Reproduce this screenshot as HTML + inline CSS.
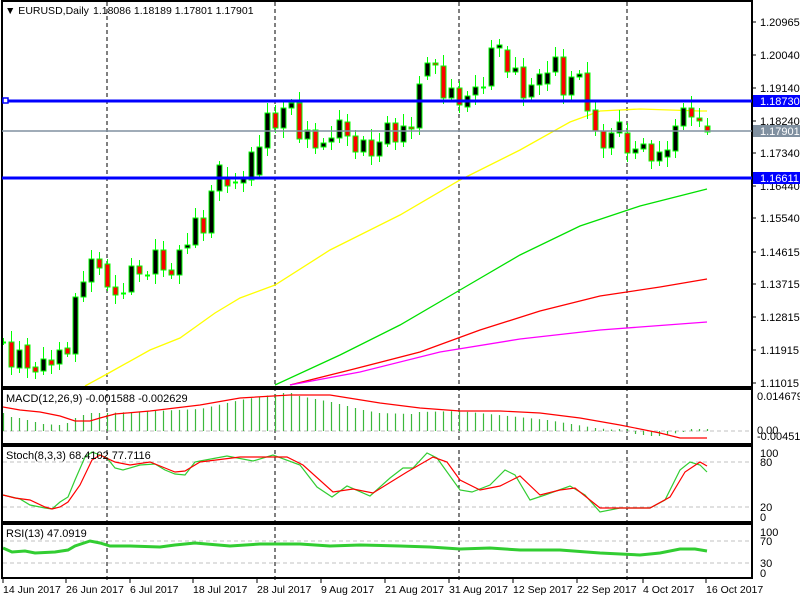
<!DOCTYPE html>
<html><head><meta charset="utf-8"><style>
html,body{margin:0;padding:0;background:#fff;width:800px;height:600px;overflow:hidden}
svg{display:block}
text{font-family:"Liberation Sans",sans-serif;font-size:11px;fill:#000}
</style></head><body>
<svg id="s" width="800" height="600" xmlns="http://www.w3.org/2000/svg">
<rect width="800" height="600" fill="#fff"/>
<g id="grid"></g>
<g id="ma"></g>
<g id="cndl"></g>
<g id="ind"></g>
<g fill="none" stroke="#000" stroke-width="2">
<rect x="2" y="1" width="750" height="386"/>
<rect x="2" y="389" width="750" height="55"/>
<rect x="2" y="446" width="750" height="76"/>
<rect x="2" y="524" width="750" height="54"/>
</g>
<line x1="2" y1="131" x2="752" y2="131" stroke="#8090a0" stroke-width="1.5"/>
<line x1="2" y1="101" x2="752" y2="101" stroke="#0000ff" stroke-width="3"/>
<line x1="2" y1="178" x2="752" y2="178" stroke="#0000ff" stroke-width="3"/>
<rect x="3" y="98" width="5" height="5" fill="#fff" stroke="#0000ff" stroke-width="1.5"/>
<text x="5" y="14" style="font-size:10.5px">&#9660; EURUSD,Daily</text>
<text x="93" y="14" style="font-size:10.5px">1.18086 1.18189 1.17801 1.17901</text>
<g id="pax"></g>
<rect x="753" y="95" width="47" height="12" fill="#0000ff"/>
<text x="760" y="105" style="fill:#fff">1.18730</text>
<rect x="753" y="125" width="47" height="12" fill="#8090a0"/>
<text x="760" y="135" style="fill:#fff">1.17901</text>
<rect x="753" y="172" width="47" height="12" fill="#0000ff"/>
<text x="760" y="182" style="fill:#fff">1.16611</text>
<text x="6" y="402">MACD(12,26,9) -0.001588 -0.002629</text>
<text x="757" y="400">0.014679</text>
<text x="757" y="434">0.00</text>
<text x="757" y="440">-0.004516</text>
<text x="6" y="459">Stoch(8,3,3) 68.4102 77.7116</text>
<text x="760" y="457">100</text><text x="760" y="466">80</text>
<text x="760" y="511">20</text><text x="760" y="521">0</text>
<text x="6" y="537">RSI(13) 47.0919</text>
<text x="760" y="536">100</text><text x="760" y="545">70</text>
<text x="760" y="567">30</text><text x="760" y="577">0</text>
<g id="dates"></g>
</svg>
<script>
var NS="http://www.w3.org/2000/svg",S=document.getElementById('s');
function el(p,t,a,txt){var e=document.createElementNS(NS,t);for(var k in a)e.setAttribute(k,a[k]);if(txt)e.textContent=txt;document.getElementById(p).appendChild(e);return e;}
function pl(pts){return pts.map(function(p){return p[0]+','+p[1]}).join(' ');}
function interp(k,x){for(var i=0;i<k.length-1;i++){if(x>=k[i][0]&&x<=k[i+1][0]){var t=(x-k[i][0])/(k[i+1][0]-k[i][0]);return k[i][1]+t*(k[i+1][1]-k[i][1]);}}return k[k.length-1][1];}
[107,275,459,627].forEach(function(x){el('grid','line',{x1:x,y1:2,x2:x,y2:582,stroke:'#000','stroke-dasharray':'4,3'});});
[[431],[462],[507],[541],[563]].forEach(function(y){el('grid','line',{x1:3,y1:y[0],x2:751,y2:y[0],stroke:'#c0c0c0','stroke-dasharray':'4,3'});});
var pr=[["1.20965",22],["1.20040",55],["1.19140",88],["1.18240",121],["1.17340",153],["1.16440",186],["1.15540",218],["1.14615",252],["1.13715",284],["1.12815",317],["1.11915",350],["1.11015",383]];
pr.forEach(function(p){el('pax','line',{x1:752,y1:p[1],x2:756,y2:p[1],stroke:'#000'});el('pax','text',{x:760,y:p[1]+4},p[0]);});
var d=[["14 Jun 2017",3],["26 Jun 2017",66],["6 Jul 2017",130],["18 Jul 2017",193],["28 Jul 2017",257],["9 Aug 2017",321],["21 Aug 2017",385],["31 Aug 2017",449],["12 Sep 2017",513],["22 Sep 2017",577],["4 Oct 2017",643],["16 Oct 2017",706]];
d.forEach(function(p){el('dates','line',{x1:p[1],y1:578,x2:p[1],y2:583,stroke:'#000'});el('dates','text',{x:p[1],y:593,style:'font-size:10.5px'},p[0]);});
var Y=[[85,386],[107,374],[150,350],[180,338],[215,313],[240,298],[275,285],[330,250],[400,215],[460,180],[520,150],[570,122],[600,111],[640,109],[700,111],[707,111]];
var G=[[275,385],[340,355],[400,325],[460,290],[520,255],[580,226],[640,206],[707,189]];
var R=[[290,385],[350,370],[420,352],[480,330],[540,311],[600,296],[660,287],[707,279]];
var M=[[290,385],[360,372],[440,352],[520,339],[600,330],[707,322]];
el('ma','polyline',{points:pl(Y),fill:'none',stroke:'#ffff00','stroke-width':1.3});
el('ma','polyline',{points:pl(G),fill:'none',stroke:'#00e000','stroke-width':1.3});
el('ma','polyline',{points:pl(R),fill:'none',stroke:'#ff0000','stroke-width':1.3});
el('ma','polyline',{points:pl(M),fill:'none',stroke:'#ff00ff','stroke-width':1.3});
var C=[[3,342,342,2],[11,342,367,1],[19,350,368,0],[27,345,368,1],[35,367,372,1],[43,359,371,0],[51,360,365,1],[59,350,364,0],[67,348,354,1],[75,297,354,0],[83,282,297,0],[91,259,282,0],[99,259,268,1],[107,264,287,1],[115,287,295,1],[123,293,293,2],[131,266,292,0],[139,266,274,1],[147,275,275,2],[155,250,274,0],[163,250,270,1],[171,270,275,1],[179,250,275,0],[187,245,248,0],[195,218,245,0],[203,218,233,1],[211,191,233,0],[219,165,191,0],[227,178,186,1],[235,182,185,2],[243,178,183,0],[251,152,180,0],[259,147,175,0],[267,113,148,0],[275,113,128,1],[283,108,128,0],[291,103,108,0],[299,103,139,1],[307,130,139,0],[315,130,148,1],[323,143,147,0],[331,138,142,0],[339,120,138,0],[347,122,136,1],[355,136,152,1],[363,140,152,0],[371,140,156,1],[379,142,156,0],[387,123,144,0],[395,123,142,1],[403,126,142,0],[411,127,129,1],[419,84,128,0],[427,63,76,0],[435,63,65,1],[443,66,98,1],[451,88,98,0],[459,88,105,1],[467,96,107,0],[475,87,95,0],[483,87,87,2],[491,48,86,0],[499,45,48,0],[507,50,72,1],[515,68,72,0],[523,67,98,1],[531,85,97,0],[539,74,85,0],[547,73,84,0],[555,57,72,0],[563,57,95,1],[571,77,95,0],[579,74,77,0],[587,73,111,1],[595,110,131,1],[603,131,148,1],[611,133,148,0],[619,122,133,0],[627,133,153,1],[635,149,153,0],[643,144,149,0],[651,144,161,1],[659,152,161,0],[667,150,157,0],[675,126,151,0],[683,108,126,0],[691,108,117,1],[699,118,121,1],[707,126,132,1]];
C.forEach(function(c,i){var a=4+(i*7)%9,b=3+(i*5)%8;
el('cndl','line',{x1:c[0]+.5,y1:c[1]-a,x2:c[0]+.5,y2:c[2]+b,stroke:'#00ff00'});
if(c[3]==2){el('cndl','line',{x1:c[0]-2,y1:c[1]+.5,x2:c[0]+3,y2:c[1]+.5,stroke:'#00ff00','stroke-width':2});}
else el('cndl','rect',{x:c[0]-2,y:c[1],width:5,height:Math.max(2,c[2]-c[1]),fill:c[3]?'#ff0000':'#000',stroke:'#00ff00','stroke-width':1});});
var H=[[3,413],[11,417],[19,418],[27,420],[35,422],[43,424],[59,425],[67,423],[75,418],[83,415],[91,413],[107,413],[200,409],[240,400],[283,393],[291,393],[299,396],[331,402],[363,410],[379,413],[411,414],[419,412],[459,411],[547,420],[595,428],[627,431],[635,434],[651,436],[659,436],[683,432],[707,431]];
for(var x=3;x<=707;x+=8){var y=interp(H,x);if(Math.abs(y-431)<1)y=429;el('ind','line',{x1:x+.5,y1:431,x2:x+.5,y2:y,stroke:'#3cb83c','stroke-width':1.2});}
var SG=[[3,407],[20,410],[40,412],[60,416],[75,421],[90,421],[100,418],[115,414],[150,411],[200,405],[240,398],[290,395],[330,395],[380,403],[420,408],[460,411],[500,411],[540,413],[580,418],[620,425],[660,433],[680,438],[707,438]];
el('ind','polyline',{points:pl(SG),fill:'none',stroke:'#ff0000','stroke-width':1.2});
var SK=[[3,495],[20,499],[30,505],[45,508],[52,509],[60,502],[68,497],[75,480],[85,457],[92,452],[100,455],[107,458],[115,468],[123,470],[140,465],[155,464],[165,470],[175,474],[185,475],[195,462],[200,461],[227,456],[253,461],[273,455],[300,465],[317,487],[332,497],[347,486],[370,496],[390,478],[403,468],[413,468],[427,453],[437,458],[460,490],[472,492],[490,485],[505,470],[515,475],[530,500],[545,495],[570,486],[585,495],[600,512],[620,508],[650,508],[665,500],[680,470],[690,462],[700,465],[707,472]];
var SD=[[3,495],[15,498],[30,500],[45,507],[52,509],[60,507],[68,502],[80,485],[92,460],[100,455],[115,462],[130,465],[150,462],[165,468],[175,472],[185,471],[200,462],[240,457],[287,457],[303,465],[333,492],[353,489],[373,493],[407,472],[433,457],[447,462],[460,480],[480,490],[500,486],[520,476],[540,495],[560,490],[575,488],[600,508],[620,508],[650,508],[670,497],[685,472],[700,462],[707,466]];
el('ind','polyline',{points:pl(SK),fill:'none',stroke:'#32cd32','stroke-width':1.2});
el('ind','polyline',{points:pl(SD),fill:'none',stroke:'#ff0000','stroke-width':1.2});
var RS=[[3,548],[12,552],[25,551],[35,553],[55,552],[68,550],[75,546],[90,541],[100,543],[110,546],[130,546],[160,547],[175,545],[195,543],[230,546],[260,544],[300,544],[330,546],[360,545],[400,546],[430,547],[460,549],[490,548],[520,550],[560,550],[600,553],[640,555],[660,553],[680,549],[695,549],[707,551]];
el('ind','polyline',{points:pl(RS),fill:'none',stroke:'#32cd32','stroke-width':3});
</script>
</body></html>
